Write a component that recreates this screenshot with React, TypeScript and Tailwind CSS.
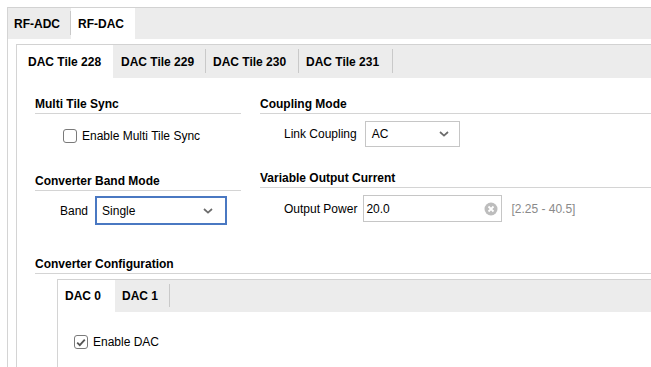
import React from 'react';

const Chevron = () => (
    <svg width="10" height="6" viewBox="0 0 10 6" className="shrink-0">
        <path d="M1 1 L5 4.6 L9 1" fill="none" stroke="#6b6b6b" strokeWidth="1.7" />
    </svg>
);

const Checkbox = ({ checked }: { checked?: boolean }) => (
    <span className="w-[14px] h-[14px] rounded-[3px] border border-[#7a7a7a] bg-white flex items-center justify-center shrink-0">
        {checked && (
            <svg width="10" height="9" viewBox="0 0 10 9">
                <path d="M1.2 4.6 L3.8 7.2 L8.8 1.6" fill="none" stroke="#555" strokeWidth="1.8" />
            </svg>
        )}
    </span>
);

const SectionHeader = ({ title }: { title: string }) => (
    <div className="font-bold leading-[14px] pb-[2px] border-b border-[#d4d4d4]">{title}</div>
);

function TabBar({ tabs, widths, pads, height }: { tabs: string[]; widths: number[]; pads: number[]; height: string }) {
    return (
        <div className={`flex ${height} bg-[#ececec] border-t border-[#d2d2d2]`}>
            {tabs.map((t, i) => (
                <div
                    key={t}
                    style={{ width: widths[i], paddingLeft: pads[i] }}
                    className={`relative flex items-center font-bold ${i === 0 ? 'bg-white' : ''}`}
                >
                    {t}
                    {i > 0 && <span className="absolute right-0 top-[4px] bottom-[5px] w-px bg-[#c9c9c9]" />}
                </div>
            ))}
        </div>
    );
}

export default function App() {
    return (
        <div className="w-[651px] h-[367px] overflow-hidden bg-white text-[12px] text-black font-['Liberation_Sans',Arial,sans-serif]">
            <div className="ml-[7px] mt-[7px] h-[360px] border-l border-[#d4d4d4]">
                {/* top tabs */}
                <div className="flex h-[32px] bg-[#ececec] border-t border-[#d2d2d2]">
                    <div className="relative w-[63px] pl-[6px] flex items-center font-bold">
                        RF-ADC
                        <span className="absolute right-0 top-[3px] bottom-[4px] w-px bg-[#c9c9c9]" />
                    </div>
                    <div className="w-[64px] pl-[7px] flex items-center font-bold bg-white">RF-DAC</div>
                </div>

                <div className="pl-[8px] pt-[5px] h-[328px]">
                    <div className="h-full border-l border-[#d4d4d4]">
                        <TabBar
                            tabs={['DAC Tile 228', 'DAC Tile 229', 'DAC Tile 230', 'DAC Tile 231']}
                            widths={[96, 93, 93, 94]}
                            pads={[11, 8, 7, 7]}
                            height="h-[34px]"
                        />

                        <div className="pl-[18px] pt-[19px]">
                            <div className="flex gap-[19px]">
                                {/* left column */}
                                <div className="w-[206px] shrink-0">
                                    <SectionHeader title="Multi Tile Sync" />
                                    <div className="mt-[14px] pl-[28px] h-[16px] flex items-center gap-[5px]">
                                        <Checkbox />
                                        <span>Enable Multi Tile Sync</span>
                                    </div>

                                    <div className="mt-[30px]">
                                        <SectionHeader title="Converter Band Mode" />
                                    </div>
                                    <div className="mt-[5px] pl-[25px] flex items-center gap-[7px]">
                                        <span>Band</span>
                                        <div className="w-[132px] h-[29px] border-2 border-[#4a78c2] flex items-center justify-between pl-[5px] pr-[12px]">
                                            <span>Single</span>
                                            <Chevron />
                                        </div>
                                    </div>
                                </div>

                                {/* right column */}
                                <div className="flex-1">
                                    <SectionHeader title="Coupling Mode" />
                                    <div className="mt-[7px] pl-[24px] flex items-center gap-[8px]">
                                        <span>Link Coupling</span>
                                        <div className="w-[95px] h-[26px] border border-[#c6c6c6] flex items-center justify-between pl-[6px] pr-[10px]">
                                            <span>AC</span>
                                            <Chevron />
                                        </div>
                                    </div>

                                    <div className="mt-[24px]">
                                        <SectionHeader title="Variable Output Current" />
                                    </div>
                                    <div className="mt-[7px] pl-[24px] flex items-center">
                                        <span>Output Power</span>
                                        <div className="ml-[6px] w-[139px] h-[27px] border border-[#c6c6c6] flex items-center justify-between pl-[2px] pr-[3px]">
                                            <span>20.0</span>
                                            <svg width="14" height="14" viewBox="0 0 14 14">
                                                <circle cx="7" cy="7" r="6.5" fill="#bdbdbd" />
                                                <path d="M4.5 4.5 L9.5 9.5 M9.5 4.5 L4.5 9.5" stroke="white" strokeWidth="1.8" />
                                            </svg>
                                        </div>
                                        <span className="ml-[9px] text-[#8a8a8a]">[2.25 - 40.5]</span>
                                    </div>
                                </div>
                            </div>

                            {/* converter configuration */}
                            <div className="mt-[32px]">
                                <SectionHeader title="Converter Configuration" />
                            </div>
                            <div className="mt-[5px] ml-[22px] h-[120px] border-l border-[#d4d4d4]">
                                <TabBar tabs={['DAC 0', 'DAC 1']} widths={[57, 55]} pads={[7, 7]} height="h-[33px]" />
                                <div className="pt-[23px] pl-[16px] flex items-start gap-[5px]">
                                    <Checkbox checked />
                                    <span className="leading-[14px]">Enable DAC</span>
                                </div>
                            </div>
                        </div>
                    </div>
                </div>
            </div>
        </div>
    );
}
